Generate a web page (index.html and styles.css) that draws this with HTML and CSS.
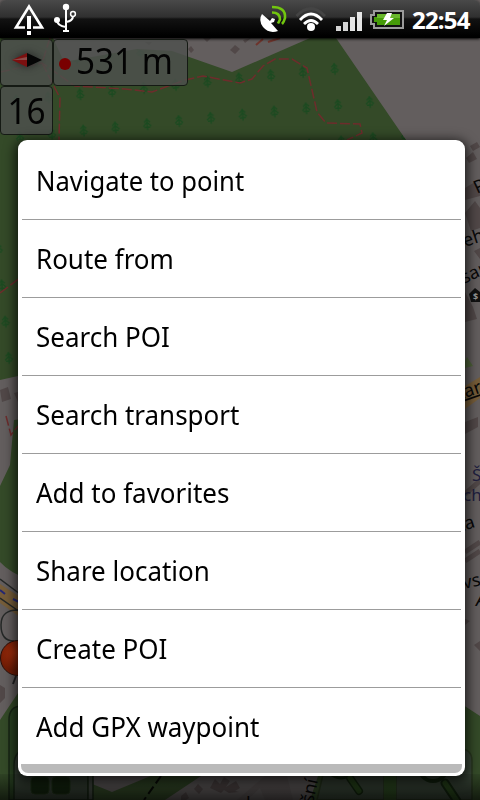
FILE: index.html
```html
<!DOCTYPE html>
<html lang="en">
<head>
<meta charset="utf-8">
<title>Map</title>
<link rel="stylesheet" href="styles.css">
</head>
<body>
<div class="screen">
  <svg class="map" width="480" height="800" viewBox="0 0 480 800">
    <defs>
      <pattern id="trees" width="31.8" height="36.3" patternUnits="userSpaceOnUse" patternTransform="matrix(1 -.1 .095 1 63 84)">
        <path d="M16 6V18M16 7l-3 3M16 7l3 3M16 10l-4 4M16 10l4 4M13 15h6" fill="none" stroke="#1b4a20" stroke-width="1.4"/>
      </pattern>
      <linearGradient id="shade" x1="0" y1="0" x2="0" y2="1"><stop offset="0" stop-color="#000" stop-opacity=".1"/><stop offset="1" stop-color="#000" stop-opacity=".65"/></linearGradient>
      <radialGradient id="pin" cx=".4" cy=".35"><stop offset="0" stop-color="#a52e0b"/><stop offset="1" stop-color="#6f1c05"/></radialGradient>
    </defs>
    <rect width="480" height="800" fill="#635e5e"/>
    <g>
      <path class="wood" d="M0 38H53L64 62 137 49 172 51 232 72 310 38H336L406 140V200H18V376L0 380Z"/>
      <path fill="url(#trees)" d="M0 100L64 62 137 49 172 60 232 72 310 42H336L406 140H18V376L0 380Z"/>
    </g>
    <path class="wood" d="M14 420L30 418V580Q10 573 0 562V486L10 465Z"/>
    <path class="wood" d="M0 720L20 690V800H0ZM70 775L112 792 165 770H210L165 800H70ZM460 703L480 716V800H310L320 770H460Z"/>
    <g class="trail">
      <path d="M0 72L42 63 75 86 125 89 152 92 185 80 203 76 240 83 252 79 263 66 275 59H292L307 68 312 90 317 112 326 123 360 124 362 133 347 140"/>
      <path d="M42 63L60 98 59 140M50 38L42 63M0 293L20 278M6 416L11 435 18 426"/>
    </g>
    <path d="M256 45l7-6M268 42l12-4" stroke="#6e342c" stroke-width="2"/>
    <g fill="#514848">
      <path d="M188 49l3-3 3 4-3 3zM230 50l5-5 5 4-5 5zM203 38h8l-4 4zM243 40l8-2-6 5zM145 42h7l-3 3z"/>
      <path d="M470 146l7-4 3 5-7 4zM466 158l7-6 4 7-8 4zM465 188l10-6 5 7v7l-15 4zM465 213l10-12 5 7v20l-9 3zM465 292l8 15 4 12-12 3zM474 251l6-3v11zM465 422l13-5v10l-13 7zM465 619l5 2-5 4zM474 645l6-4v10z"/>
      <path d="M0 390l8-3 3 12-9 3zM14 393l4-1v10zM0 685l5 3v10l-5 5zM181 796l5-4 3 6-3 2h-5zM194 789l4-5 5 5-4 5zM210 788l5-9 5 5 4-7 6 4-4 6 10-6 4 7-5 3 4 1-10 1-5-3-3 3z"/>
    </g>
    <path d="M465 494l15-13M465 552l15-10M465 561l15-10" stroke="#514848" stroke-width="5"/>
    <path d="M0 584L20 597V617L0 603ZM465 386L480 377V398L465 409Z" fill="#765d39"/>
    <path d="M0 579l20 15M0 598l20 14M20 610Q1 609 1 625t13 16" fill="none" stroke="#252827" stroke-width="1.5"/>
    <path d="M0 590l5 4M13 599l6 3" stroke="#252873" stroke-width="2"/>
    <path d="M465 361l2-4 6 9-8 2z" fill="#50643b"/>
    <circle cx="18" cy="658" r="17.500" fill="url(#pin)" stroke="#29100a"/>
    <path d="M13 684l3-8" stroke="#222" stroke-width="2"/>
    <path d="M161 776L144 800" stroke="#080b06" stroke-width="2" stroke-dasharray="9 4"/>
    <path d="M265 776l20-8 8 32h-28l-5-12-13 12h-10z" fill="#5d5757"/>
    <g class="labels">
      <text transform="translate(477 194) rotate(-25)">P</text>
      <text transform="translate(465 247) rotate(-18)">eh</text>
      <text transform="translate(464 284) rotate(-25)">sar</text>
      <text transform="translate(457 401) rotate(-19)" text-decoration="underline">kar</text>
      <text class="blue" x="472" y="481">Š</text>
      <text class="blue" x="463" y="501">ch</text>
      <text transform="translate(457 533) rotate(-18)">ka</text>
      <text transform="translate(464 589) rotate(-12)">vs</text>
      <text x="476" y="606" font-style="italic">A</text>
      <text transform="translate(313 804) rotate(-78)">šní</text>
      <text x="246" y="810">k</text>
    </g>
    <path d="M469 294l6-6 5 4v10h-9z" fill="#111"/><text x="473" y="300" class="bank">$</text>
    <g stroke="#172615" stroke-width="1.5">
      <path d="M9 800V720q0-14 13-14V800Z" fill="#213a1d" fill-opacity=".6"/>
      <path d="M14 800V766q0-16 12-16H88V800Z" fill="#354034"/>
      <path d="M88 770h5v30h-5z" fill="#444b43"/>
      <path d="M317 800l8-34h59v34zM396 800V749h64q12 0 12 12v39z" fill="#384537" stroke="#29371f"/>
    </g>
    <path d="M384 775h12v25h-12z" fill="#2e4b22"/>
    <g fill="#14260f" stroke="#213419"><rect x="31" y="777" width="18" height="17" rx="4"/><rect x="52" y="777" width="18" height="17" rx="4"/></g>
    <g fill="none" stroke="#142610" stroke-linecap="round"><circle cx="341" cy="762" r="16" stroke-width="3"/><path d="M350 778l9 13" stroke-width="8"/><circle cx="433" cy="767" r="14" stroke-width="4"/><path d="M445 783l12 18" stroke-width="9"/></g>
    <g fill="none" stroke="#28461b" stroke-linecap="round"><path d="M350 778l9 13M445 783l12 18" stroke-width="5"/></g>
    <rect y="774" width="480" height="26" fill="url(#shade)"/>
  </svg>

  <header class="status">
    <svg class="status-left" width="80" height="38" viewBox="0 0 80 38">
      <path d="M25 27.500H16L29 6.500 42 27.500H33" fill="none" stroke="#fff" stroke-width="2.6"/>
      <path d="M27 16h4v13h-4zM27 31h4v4h-4z" fill="#fff"/>
      <g fill="none" stroke="#fff" stroke-width="2"><path d="M66 7V30M57 20q0 6 9 7M73 16q0 5-7 6"/><circle cx="73" cy="14" r="2.4" stroke-width="1.5"/></g>
      <g fill="#fff"><circle cx="66" cy="7" r="3.2"/><circle cx="57" cy="20" r="3"/><path d="M63 30h6v2h-6z"/></g>
    </svg>
    <svg class="status-right" width="150" height="38" viewBox="256 0 150 38">
      <path d="M262 14L270 21 272 18 275 19 274 22 271 23 278 31Q269 34 263 27 258 20 262 14Z" fill="#fff"/>
      <g fill="none" stroke="#72c60f" stroke-width="2.6"><path d="M272 7q14 0 13 11-1 4-3 6"/><path d="M272 12.500q8 0 8 7l-2 4"/></g>
      <g fill="none" stroke-width="2.8"><path d="M296.500 16Q310.500 1 325 16" stroke="#444"/><path d="M300 20Q311 8 322 20" stroke="#fff"/><path d="M304 24Q311 17 318 24" stroke="#fff"/></g>
      <circle cx="311" cy="27" r="4" fill="#fff"/>
      <g fill="#d5d5d5"><path d="M336 26h5v5h-5zM343 22h5v9h-5z"/><path d="M350 17h5v14h-5zM357 12h5v19h-5z" fill="#e5e5e5"/></g>
      <path d="M374 11H403V28H374V24H371V15H374Z" fill="#111" stroke="#9b9b9b" stroke-width="2"/>
      <path d="M377 14H400V25H377V22H374V17H377Z" fill="#459b08"/><path d="M377 14H400V18H377Z" fill="#69b82c"/>
      <path d="M387 13h5l-2 5h4l-10 8 3-6h-4z" fill="#fff"/>
    </svg>
    <span class="clock">22:54</span>
  </header>

  <section class="widgets">
    <div class="row">
      <div class="box compass"><svg width="34" height="18" viewBox="0 0 34 18"><path d="M2 9L17 2V16Z" fill="#7b1010"/><path d="M2 9L17 6V9Z" fill="#8c4a48"/><path d="M17 2L32 9 17 16Z" fill="#050505"/></svg></div>
      <div class="box distance"><i class="dot"></i><span>531 m</span></div>
    </div>
    <div class="box zoom"><span>16</span></div>
  </section>

  <main class="dialog">
    <ul class="menu">
      <li><span class="first">Navigate to point</span></li>
      <li><span>Route from</span></li>
      <li><span>Search POI</span></li>
      <li><span>Search transport</span></li>
      <li><span>Add to favorites</span></li>
      <li><span>Share location</span></li>
      <li><span>Create POI</span></li>
      <li><span>Add GPX waypoint</span></li>
    </ul>
    <div class="foot"></div>
  </main>
</div>
</body>
</html>
```
FILE: styles.css
```css
* { box-sizing: border-box; }
body { margin: 0; background: #000; font-family: "Noto Sans", "Open Sans", sans-serif; }
.screen { position: relative; width: 480px; height: 800px; overflow: hidden; }
.map { position: absolute; left: 0; top: 0; }
.wood { fill: #344a28; }
.trail { fill: none; stroke: #6e2c2c; stroke-width: 1.5; stroke-dasharray: 10 3; }
.labels { font-size: 18px; fill: #080808; }
.labels .blue { fill: #20203f; font-size: 17px; }
.bank { font-size: 9px; fill: #999; font-weight: bold; }
.status { position: relative; display: flex; justify-content: space-between; height: 38px; padding-right: 9px; border-radius: 6px 6px 0 0; background: linear-gradient(#494949, #303030 17px, #121212 19px, #000 36px); box-shadow: 0 1px 3px #000; }
.status-left { margin-right: 176px; }
.status-right { flex: none; margin-right: 6px; }
.clock { display: block; width: 59px; font-size: 24px; line-height: 39px; font-weight: 700; color: #fff; letter-spacing: -.8px; white-space: nowrap; }
.widgets { position: relative; display: flex; flex-direction: column; align-items: flex-start; margin-top: 1px; }
.row { display: flex; }
.box { height: 47px; display: flex; align-items: center; border: 1.500px solid #151a14; border-radius: 4px; background: rgba(78, 80, 78, .82); color: #030303; font-size: 36px; line-height: 46px; white-space: nowrap; }
.box span { transform: scaleX(.925); }
.compass { width: 53px; justify-content: center; padding-bottom: 6px; }
.compass svg { filter: drop-shadow(0 0 4px #222); }
.distance { width: 135px; padding-left: 5px; gap: 5px; }
.distance span { margin-top: -3px; transform-origin: left; }
.dot { width: 12px; height: 12px; border-radius: 50%; background: #790000; margin-top: 3px; }
.zoom { width: 53px; height: 49px; justify-content: center; }
.dialog { position: relative; width: 447px; height: 636px; margin: 5px 0 0 18px; padding: 0 3px 3px; background: #fff; border-radius: 9px; box-shadow: 0 3px 12px 3px rgba(0,0,0,.7); }
.menu { list-style: none; margin: 0; padding: 0 1px; }
.menu li { height: 78px; padding: 2px 0 0 14px; border-bottom: 1px solid #9c9c9c; font-size: 27px; line-height: 74px; color: #000; }
.menu li:first-child { height: 80px; padding-top: 4px; }
.menu li:last-child { height: 76px; border: 0; }
.menu span { display: inline-block; white-space: nowrap; transform: scaleX(.962); transform-origin: left; }
.menu .first { transform: scaleX(.948); }
.foot { height: 9px; background: #bababa; border-radius: 0 0 7px 7px; }
```
